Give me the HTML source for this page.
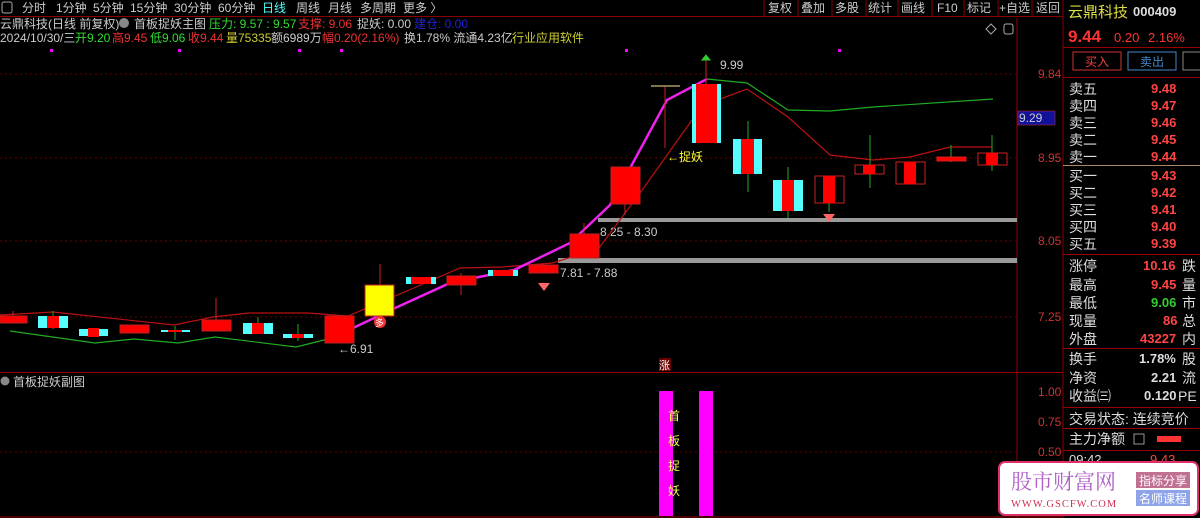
<!DOCTYPE html>
<html><head><meta charset="utf-8"><style>
body{margin:0;background:#000;width:1200px;height:518px;overflow:hidden;font-family:"Liberation Sans","Noto Sans CJK SC",sans-serif;}
svg{position:absolute;left:0;top:0}
</style></head><body>
<svg width="1200" height="518" xmlns="http://www.w3.org/2000/svg" font-family="Liberation Sans, Noto Sans CJK SC, sans-serif">
<!-- toolbar -->
<line x1="0" y1="16.5" x2="1063" y2="16.5" stroke="#800" />
<rect x="2" y="2" width="10" height="11" fill="none" stroke="#aaa" rx="2"/>
<g font-size="12" fill="#ccc">
<text x="22" y="12">分时</text><text x="56" y="12">1分钟</text><text x="93" y="12">5分钟</text><text x="130" y="12">15分钟</text><text x="174" y="12">30分钟</text><text x="218" y="12">60分钟</text>
<text x="262" y="12" fill="#5ff">日线</text><text x="296" y="12">周线</text><text x="328" y="12">月线</text><text x="360" y="12">多周期</text><text x="403" y="12">更多 〉</text>
</g>
<g stroke="#800"><line x1="764" y1="0" x2="764" y2="16"/><line x1="798" y1="0" x2="798" y2="16"/><line x1="832" y1="0" x2="832" y2="16"/><line x1="866" y1="0" x2="866" y2="16"/><line x1="898" y1="0" x2="898" y2="16"/><line x1="932" y1="0" x2="932" y2="16"/><line x1="964" y1="0" x2="964" y2="16"/><line x1="998" y1="0" x2="998" y2="16"/><line x1="1032" y1="0" x2="1032" y2="16"/><line x1="1063" y1="0" x2="1063" y2="518"/></g>
<g font-size="12" fill="#ccc"><text x="768" y="12">复权</text><text x="801" y="12">叠加</text><text x="835" y="12">多股</text><text x="868" y="12">统计</text><text x="901" y="12">画线</text><text x="937" y="12">F10</text><text x="967" y="12">标记</text><text x="999" y="12">+自选</text><text x="1036" y="12">返回</text></g>
<!-- info lines -->
<g font-size="12">
<text x="0" y="28" fill="#ccc">云鼎科技(日线 前复权)</text>
<circle cx="124" cy="23" r="5" fill="#888"/>
<text x="134" y="28" fill="#ccc">首板捉妖主图</text>
<text x="209" y="28" fill="#3d3">压力: 9.57 : 9.57</text>
<text x="298" y="28" fill="#e33">支撑: 9.06</text>
<text x="357" y="28" fill="#ccc">捉妖: 0.00</text>
<text x="414" y="28" fill="#22c">建仓: 0.00</text>
<text x="0" y="42" fill="#ccc">2024/10/30/三</text>
<text x="75" y="42" fill="#3d3">开9.20</text><text x="112" y="42" fill="#e33">高9.45</text><text x="150" y="42" fill="#3d3">低9.06</text><text x="188" y="42" fill="#e33">收9.44</text>
<text x="226" y="42" fill="#cc3">量75335</text><text x="271" y="42" fill="#ccc">额6989万</text><text x="322" y="42" fill="#e33">幅0.20(2.16%)</text>
<text x="404" y="42" fill="#ccc">换1.78% 流通4.23亿</text><text x="512" y="42" fill="#cc3">行业应用软件</text>
</g>
<g fill="#f0f"><rect x="50" y="49" width="3" height="3"/><rect x="178" y="49" width="3" height="3"/><rect x="298" y="49" width="3" height="3"/><rect x="340" y="49" width="3" height="3"/><rect x="625" y="49" width="3" height="3"/><rect x="838" y="49" width="3" height="3"/></g>
<path d="M986 29 l5 -5 l5 5 l-5 5z" fill="none" stroke="#aaa"/>
<rect x="1004" y="24" width="9" height="10" fill="none" stroke="#aaa" rx="2"/>
<!-- grid -->
<g stroke="#600" stroke-dasharray="2,3"><line x1="0" y1="74" x2="1017" y2="74"/><line x1="0" y1="158" x2="1017" y2="158"/><line x1="0" y1="241" x2="1017" y2="241"/><line x1="0" y1="317" x2="1017" y2="317"/><line x1="0" y1="452" x2="1017" y2="452"/></g>
<line x1="1017" y1="18" x2="1017" y2="518" stroke="#900"/>
<line x1="0" y1="372.5" x2="1063" y2="372.5" stroke="#900"/>
<g font-size="12" fill="#c33"><text x="1038" y="78">9.84</text><text x="1038" y="162">8.95</text><text x="1038" y="245">8.05</text><text x="1038" y="321">7.25</text><text x="1038" y="396">1.00</text><text x="1038" y="426">0.75</text><text x="1038" y="456">0.50</text></g>
<rect x="1018" y="111" width="37" height="14" fill="#119" stroke="#c33" stroke-width="0.5"/><text x="1019" y="122" font-size="12" fill="#ccc">9.29</text>
<!-- grey bars -->
<rect x="598" y="218" width="419" height="4" fill="#999"/><rect x="558" y="258" width="459" height="5" fill="#999"/>
<g font-size="12" fill="#ccc"><text x="600" y="236">8.25 - 8.30</text><text x="560" y="277">7.81 - 7.88</text><text x="338" y="353">←6.91</text><text x="720" y="69">9.99</text><text x="667" y="161" fill="#ff3">←捉妖</text></g>
<!-- lines -->
<polyline fill="none" stroke="#b11" stroke-width="1.2" points="0,315 53,312 174,325 213,317 249,313 308,313 348,316 393,297 460,268 502,267 553,263 599,248 640,193 692,120 720,99 747,89 788,117 830,155 873,160 910,157 950,147 992,147"/>
<polyline fill="none" stroke="#2a2" stroke-width="1.2" points="10,331 95,343 134,339 178,343 215,337 296,347 328,339"/>
<polyline fill="none" stroke="#2a2" stroke-width="1.2" points="707,79 747,83 788,110 830,111 873,107 993,99"/>
<polyline fill="none" stroke="#e2e" stroke-width="2.5" points="351,329 393,309 450,283 474,278 514,270 541,257 570,243 610,205 667,100 707,79"/>
<!-- candles -->
<g stroke-width="1">
<line x1="13" y1="311" x2="13" y2="316" stroke="#c22"/><rect x="0" y="316" width="27" height="7" fill="#f00" stroke="#b22"/>
<line x1="53" y1="311" x2="53" y2="329" stroke="#2a2"/><rect x="38" y="316" width="30" height="12" fill="#5ff"/><rect x="47" y="316" width="12" height="12" fill="#f00"/>
<rect x="79" y="329" width="29" height="7" fill="#5ff"/><rect x="88" y="328" width="11" height="9" fill="#f00"/>
<rect x="120" y="325" width="29" height="8" fill="#f00" stroke="#b22"/>
<line x1="175" y1="326" x2="175" y2="340" stroke="#2a2"/><rect x="161" y="330" width="29" height="2" fill="#5ff"/><rect x="168" y="330" width="14" height="2" fill="#f00"/>
<line x1="216" y1="298" x2="216" y2="320" stroke="#c22"/><rect x="202" y="320" width="29" height="11" fill="#f00" stroke="#b22"/>
<line x1="258" y1="317" x2="258" y2="323" stroke="#2a2"/><rect x="243" y="323" width="30" height="11" fill="#5ff"/><rect x="252" y="323" width="12" height="11" fill="#f00"/>
<line x1="298" y1="324" x2="298" y2="341" stroke="#2a2"/><rect x="283" y="334" width="30" height="4" fill="#5ff"/><rect x="292" y="334" width="12" height="4" fill="#f00"/>
<rect x="325" y="316" width="29" height="27" fill="#f00" stroke="#b22"/>
<line x1="380" y1="264" x2="380" y2="285" stroke="#c22"/><rect x="365" y="285" width="29" height="31" fill="#ff0" stroke="#b22"/>
<circle cx="380" cy="322" r="6" fill="#e33"/><text x="375" y="326" font-size="9" fill="#fff">多</text>
<rect x="406" y="277" width="30" height="7" fill="#5ff"/><rect x="411" y="277" width="20" height="7" fill="#f00"/>
<line x1="461" y1="273" x2="461" y2="295" stroke="#c22"/><rect x="447" y="276" width="29" height="9" fill="#f00" stroke="#b22"/>
<rect x="488" y="270" width="30" height="6" fill="#5ff"/><rect x="493" y="270" width="20" height="6" fill="#f00"/>
<rect x="529" y="265" width="29" height="8" fill="#f00" stroke="#b22"/>
<path d="M538 283 h12 l-6 8z" fill="#f66"/>
<line x1="584" y1="223" x2="584" y2="234" stroke="#c22"/><rect x="570" y="234" width="29" height="24" fill="#f00" stroke="#b22"/>
<line x1="625" y1="204" x2="625" y2="215" stroke="#c22"/><rect x="611" y="167" width="29" height="37" fill="#f00" stroke="#b22"/>
<line x1="665" y1="86" x2="665" y2="148" stroke="#c22"/><line x1="651" y1="86" x2="680" y2="86" stroke="#a96" stroke-width="1.5"/>
<line x1="706" y1="55" x2="706" y2="84" stroke="#c22"/><path d="M706 55 l-4 5 h8z M703 58 h6" stroke="#3c3" fill="#3c3"/>
<rect x="692" y="84" width="29" height="59" fill="#5ff"/><rect x="696" y="84" width="21" height="59" fill="#f00"/>
<line x1="748" y1="121" x2="748" y2="192" stroke="#2a2"/><rect x="733" y="139" width="29" height="35" fill="#5ff"/><rect x="741" y="139" width="13" height="35" fill="#f00"/>
<line x1="788" y1="167" x2="788" y2="218" stroke="#2a2"/><rect x="773" y="180" width="30" height="31" fill="#5ff"/><rect x="782" y="180" width="12" height="31" fill="#f00"/>
<line x1="829" y1="203" x2="829" y2="212" stroke="#2a2"/><rect x="815" y="176" width="29" height="27" fill="none" stroke="#c22"/><rect x="823" y="176" width="12" height="27" fill="#f00"/>
<path d="M823 214 h12 l-6 8z" fill="#f66"/>
<line x1="870" y1="135" x2="870" y2="188" stroke="#2a2"/><rect x="855" y="165" width="29" height="9" fill="none" stroke="#c22"/><rect x="863" y="165" width="12" height="9" fill="#f00"/>
<rect x="896" y="162" width="29" height="22" fill="none" stroke="#c22"/><rect x="904" y="162" width="12" height="22" fill="#f00"/>
<line x1="951" y1="145" x2="951" y2="162" stroke="#2a2"/><rect x="937" y="157" width="29" height="4" fill="#f00" stroke="#c22"/>
<line x1="992" y1="135" x2="992" y2="171" stroke="#2a2"/><rect x="978" y="153" width="29" height="12" fill="none" stroke="#c22"/><rect x="986" y="153" width="12" height="12" fill="#f00"/>
</g>
<!-- sub chart -->
<rect x="659" y="358" width="12" height="13" fill="#600"/><text x="659" y="369" font-size="11" fill="#fff">涨</text>
<circle cx="5" cy="381" r="4.5" fill="#888"/><text x="13" y="386" font-size="12" fill="#ccc">首板捉妖副图</text>
<rect x="659" y="391" width="14" height="125" fill="#f0f"/><rect x="699" y="391" width="14" height="125" fill="#f0f"/>
<g font-size="12" fill="#ff5"><text x="668" y="420">首</text><text x="668" y="445">板</text><text x="668" y="470">捉</text><text x="668" y="495">妖</text></g>
<line x1="0" y1="517" x2="1063" y2="517" stroke="#900"/>
<!-- right panel -->
<text x="1068" y="17" font-size="15" fill="#dd4">云鼎科技</text><text x="1133" y="16" font-size="13" fill="#ddd" font-weight="bold">000409</text>
<text x="1068" y="42" font-size="17" fill="#f33" font-weight="bold">9.44</text><text x="1114" y="42" font-size="13" fill="#f33">0.20</text><text x="1148" y="42" font-size="13" fill="#f33">2.16%</text>
<line x1="1063" y1="47.5" x2="1200" y2="47.5" stroke="#900"/>
<rect x="1073" y="52" width="48" height="18" fill="none" stroke="#c33"/><text x="1085" y="66" font-size="12" fill="#e44">买入</text>
<rect x="1128" y="52" width="48" height="18" fill="none" stroke="#48c"/><text x="1140" y="66" font-size="12" fill="#48c">卖出</text>
<rect x="1183" y="52" width="20" height="18" fill="none" stroke="#888"/>
<line x1="1063" y1="77.5" x2="1200" y2="77.5" stroke="#900"/>
<g font-size="14" fill="#ddd"><text x="1069" y="94">卖五</text><text x="1069" y="111">卖四</text><text x="1069" y="128">卖三</text><text x="1069" y="145">卖二</text><text x="1069" y="162">卖一</text>
<text x="1069" y="181">买一</text><text x="1069" y="198">买二</text><text x="1069" y="215">买三</text><text x="1069" y="232">买四</text><text x="1069" y="249">买五</text></g>
<g font-size="13" fill="#f44" font-weight="bold"><text x="1151" y="93">9.48</text><text x="1151" y="110">9.47</text><text x="1151" y="127">9.46</text><text x="1151" y="144">9.45</text><text x="1151" y="161">9.44</text>
<text x="1151" y="180">9.43</text><text x="1151" y="197">9.42</text><text x="1151" y="214">9.41</text><text x="1151" y="231">9.40</text><text x="1151" y="248">9.39</text></g>
<line x1="1063" y1="165.5" x2="1200" y2="165.5" stroke="#a86"/>
<line x1="1063" y1="254.5" x2="1200" y2="254.5" stroke="#900"/>
<g font-size="14" fill="#ddd"><text x="1069" y="271">涨停</text><text x="1069" y="290">最高</text><text x="1069" y="308">最低</text><text x="1069" y="326">现量</text><text x="1069" y="344">外盘</text>
<text x="1069" y="364">换手</text><text x="1069" y="383">净资</text><text x="1069" y="401">收益㈢</text><text x="1069" y="424">交易状态: 连续竞价</text><text x="1069" y="444">主力净额</text>
<text x="1182" y="271">跌</text><text x="1182" y="290">量</text><text x="1182" y="308">市</text><text x="1182" y="326">总</text><text x="1182" y="344">内</text><text x="1182" y="364">股</text><text x="1182" y="383">流</text><text x="1178" y="401">PE</text></g>
<g font-size="13" font-weight="bold"><text x="1143" y="270" fill="#f44">10.16</text><text x="1151" y="289" fill="#f44">9.45</text><text x="1151" y="307" fill="#3c3">9.06</text><text x="1163" y="325" fill="#f44">86</text><text x="1140" y="343" fill="#f44">43227</text>
<text x="1139" y="363" fill="#ddd">1.78%</text><text x="1151" y="382" fill="#ddd">2.21</text><text x="1144" y="400" fill="#ddd">0.120</text></g>
<line x1="1063" y1="348.5" x2="1200" y2="348.5" stroke="#900"/><line x1="1063" y1="407.5" x2="1200" y2="407.5" stroke="#900"/><line x1="1063" y1="428.5" x2="1200" y2="428.5" stroke="#900"/><line x1="1063" y1="450.5" x2="1200" y2="450.5" stroke="#900"/>
<rect x="1134" y="434" width="10" height="10" fill="none" stroke="#999"/><rect x="1157" y="436" width="24" height="6" fill="#f33"/>
<text x="1069" y="464" font-size="13" fill="#ddd">09:42</text><text x="1150" y="464" font-size="13" fill="#f44">9.43</text>
<!-- watermark -->
<rect x="999" y="462" width="199" height="53" rx="6" fill="#fff" stroke="#e0306a" stroke-width="2"/>
<text x="1011" y="489" font-size="21" fill="#b060c8" font-family="Liberation Serif, Noto Serif CJK SC, serif">股市财富网</text>
<text x="1011" y="507" font-size="10.5" fill="#d03050" font-family="Liberation Serif, serif" letter-spacing="1">WWW.GSCFW.COM</text>
<rect x="1136" y="472" width="54" height="16" fill="#c07090"/><text x="1139" y="485" font-size="12" fill="#fff">指标分享</text>
<rect x="1136" y="490" width="54" height="16" fill="#8fa4e8"/><text x="1139" y="503" font-size="12" fill="#fff">名师课程</text>
</svg>
</body></html>
